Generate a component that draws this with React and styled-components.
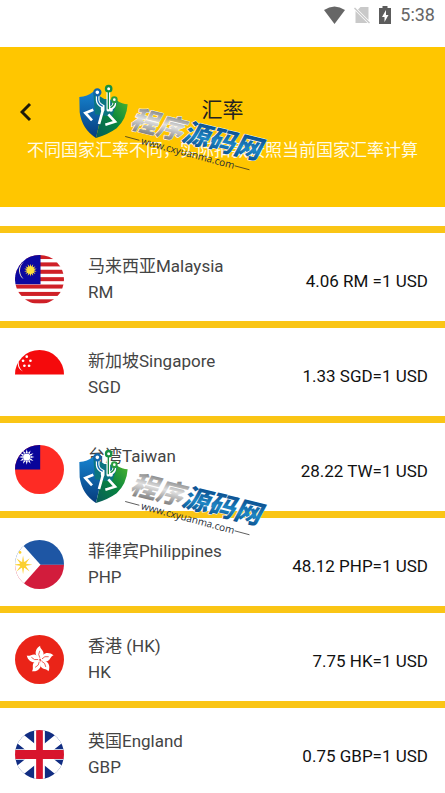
import React from "react";
import styled, { createGlobalStyle } from "styled-components";

const GlobalStyle = createGlobalStyle`
  html {
    scrollbar-width: none;
  }
  body {
    margin: 0;
    background: #fff;
    font-family: Roboto, "Noto Sans CJK SC", sans-serif;
  }
`;

const Page = styled.div`
  overflow-x: hidden;
`;

const StatusBar = styled.div`
  display: flex;
  align-items: center;
  justify-content: flex-end;
  height: 24px;
  padding: 3px 10px 20px;
  font-size: 18px;
  line-height: 24px;
  color: #666;
  svg {
    display: block;
  }
`;

const StatusIcon = styled.svg`
  height: 18px;
  width: ${({ $width }) => $width}px;
  margin-right: 9px;
`;

const Header = styled.header`
  position: relative;
  padding: 47px 16px 45px;
  background: #ffc600;
`;

const TitleRow = styled.div`
  display: grid;
  grid-template-columns: 1fr auto 1fr;
  align-items: center;
`;

const BackButton = styled.button`
  display: flex;
  justify-self: start;
  padding: 6px 4px 2px;
  border: 0;
  background: none;
  cursor: pointer;
`;

const Title = styled.h1`
  margin: 0;
  font-size: 21px;
  font-weight: 400;
  line-height: 32px;
  color: #222;
`;

const Notice = styled.p`
  margin: 12px -16px 0;
  font-size: 17px;
  line-height: 24px;
  color: #fffbe6;
  text-align: center;
`;

const List = styled.ul`
  margin: 19px 0 0;
  padding: 0;
  list-style: none;
`;

const Row = styled.li`
  position: relative;
  display: flex;
  align-items: center;
  padding: 20px 17px 16px 15px;
  border-top: 7px solid #fac515;
`;

const Flag = styled.svg`
  flex: none;
  width: 49px;
  height: 49px;
  margin-right: 24px;
  border-radius: 50%;
`;

const Country = styled.div`
  flex: 1;
  font-size: 17px;
  line-height: 26px;
  color: #444;
`;

const Name = styled.div``;

const Code = styled.div``;

const Rate = styled.span`
  padding-top: 4px;
  font-size: 17px;
  line-height: 26px;
  color: #111;
`;

const Mark = styled.svg`
  position: absolute;
  z-index: 1;
  left: 70px;
  top: ${({ $top }) => $top}px;
  width: 205px;
  height: 105px;
  pointer-events: none;
`;

const Watermark = ({ id, top }) => (
  <Mark $top={top} viewBox="0 0 615 315">
    <defs>
      <linearGradient id={`${id}-left`} x1="0" y1="0" x2="0" y2="1">
        <stop offset="0" stopColor="#1683cf" />
        <stop offset="1" stopColor="#063b7c" />
      </linearGradient>
      <linearGradient id={`${id}-right`} x1="1" y1="0" x2="0" y2="1">
        <stop offset="0" stopColor="#4db52d" />
        <stop offset="0.5" stopColor="#07833f" />
        <stop offset="1" stopColor="#075a5c" />
      </linearGradient>
      <linearGradient id={`${id}-silver`} x1="0" y1="0" x2="0" y2="1">
        <stop offset="0.2" stopColor="#858585" />
        <stop offset="0.5" stopColor="#e0e0e0" />
        <stop offset="0.9" stopColor="#747474" />
      </linearGradient>
      <linearGradient id={`${id}-blue`} x1="0" y1="0" x2="0" y2="1">
        <stop offset="0.2" stopColor="#0b4c8c" />
        <stop offset="0.6" stopColor="#1d86c4" />
        <stop offset="0.9" stopColor="#0a4a88" />
      </linearGradient>
    </defs>
    <path d="M28 66 Q52 64 70 50 L103 80 L78 189 Q36 163 29 112 Z" fill={`url(#${id}-left)`} />
    <path d="M103 72 L139 76 Q157 88 173 88 Q170 132 140 160 Q112 180 78 189 Q90 140 103 72 Z" fill={`url(#${id}-right)`} />
    <path d="M70 52 L103 72 L143 78 L126 125 L75 118 Z" fill="#0a7580" />
    <g fill="none" strokeLinecap="round">
      <g stroke="#fff" strokeWidth="11">
        <path d="M83 58 V76 Q84 87 98 94 V104" />
        <path d="M115 47 V104" />
        <path d="M133 82 Q134 94 123 99 V105" />
      </g>
      <path d="M83 60 V74 Q84 87 97 93" stroke="#0e69ad" strokeWidth="4" />
      <path d="M115 50 V101" stroke="#168a43" strokeWidth="4" />
      <path d="M133 82 Q133 92 123 97" stroke="#168a43" strokeWidth="4" />
      <circle cx="82" cy="52" r="9" fill="#fff" stroke="#1165aa" strokeWidth="7" />
      <circle cx="116" cy="41" r="8" fill="#fff" stroke="#159044" strokeWidth="7" />
      <circle cx="133" cy="74" r="7" fill="#fff" stroke="#299c3e" strokeWidth="6" />
    </g>
    <path d="M70 104 L46 114 L66 136 M99 104 L87 147 M115 118 L135 140 L106 149" fill="none" stroke="#fff" strokeWidth="8" />
    <g transform="rotate(14 179 150)" fontFamily="'Noto Sans CJK SC', sans-serif" fontWeight="900" fontStyle="italic" fontSize="80">
      <text x="179" y="158" stroke="#fff" strokeWidth="3" strokeLinejoin="round" paintOrder="stroke">
        <tspan fill={`url(#${id}-silver)`}>程序</tspan>
        <tspan fill={`url(#${id}-blue)`}>源码网</tspan>
      </text>
    </g>
    <g transform="rotate(15 168 183)">
      <path d="M166 185 H210 M506 185 H552" stroke="#222" strokeWidth="2" />
      <text x="216" y="195" fill="#1d2b35" fontFamily="'Open Sans', sans-serif" fontSize="30" fontWeight="500">
        www.cxyuanma.com
      </text>
    </g>
  </Mark>
);

const rays = (count, cx, cy, inner, outer, half) =>
  Array.from({ length: count }, (_, i) => (
    <path
      key={i}
      d={`M${cx - half} ${cy - inner} L${cx} ${cy - outer} L${cx + half} ${cy - inner} Z`}
      transform={`rotate(${(360 / count) * i} ${cx} ${cy})`}
    />
  ));

const Malaysia = () => (
  <>
    <rect width="146" height="146" fill="#fff" />
    {[0, 1, 2, 3, 4, 5, 6].map((i) => (
      <rect key={i} y={i * 22} width="146" height="12" fill="#cf2027" />
    ))}
    <rect width="76" height="87" fill="#0c08a0" />
    <path d="M27 20 A31 31 0 0 0 31 75 A34 34 0 0 1 27 20 Z" fill="#fff6c8" />
    <g fill="#ffe23c">
      <circle cx="46" cy="45" r="10" />
      {rays(14, 46, 45, 8, 19, 3)}
    </g>
  </>
);

const Singapore = () => (
  <>
    <rect width="146" height="146" fill="#fff" />
    <rect width="146" height="73" fill="#f50a0c" />
    <path d="M22 16 A27 27 0 0 0 26 65 A30 30 0 0 1 22 16 Z" fill="#fff" />
    <g fill="#fff">
      {[[35, 20], [24, 32], [46, 32], [28, 47], [42, 47]].map(([x, y]) => (
        <circle key={`${x}-${y}`} cx={x} cy={y} r="4" />
      ))}
    </g>
  </>
);

const Taiwan = () => (
  <>
    <rect width="146" height="146" fill="#fe2b24" />
    <rect width="75" height="73" fill="#09049a" />
    <g fill="#fff">
      <circle cx="35" cy="36" r="11" />
      {rays(12, 35, 36, 12, 23, 3)}
    </g>
  </>
);

const Philippines = () => (
  <>
    <rect width="146" height="74" fill="#1e56a4" />
    <rect y="74" width="146" height="72" fill="#d21c3c" />
    <path d="M0 -11 L76 74 L0 159 Z" fill="#fff" />
    <g fill="#fbd02f">
      <circle cx="24" cy="74" r="10" />
      {rays(8, 24, 74, 9, 28, 3)}
      <circle cx="15" cy="37" r="4" />
    </g>
  </>
);

const HongKong = () => (
  <>
    <rect width="146" height="146" fill="#ea2418" />
    {[0, 72, 144, 216, 288].map((angle) => (
      <g key={angle} transform={`rotate(${angle} 75 74)`}>
        <path d="M75 72 C58 65 56 43 75 32 C73 42 90 47 84 61 Q81 68 75 72 Z" fill="#fff" />
        <path d="M74 68 Q67 58 74 47" fill="none" stroke="#ea2418" strokeWidth="2" />
      </g>
    ))}
  </>
);

const England = () => (
  <>
    <rect width="146" height="146" fill="#112d82" />
    <path d="M0 14 L146 132 M146 14 L0 132" stroke="#fff" strokeWidth="32" />
    <path d="M73 0 V146 M0 73 H146" stroke="#fff" strokeWidth="32" />
    <path d="M73 0 V146" stroke="#d8142c" strokeWidth="20" />
    <path d="M0 73 H146" stroke="#d8142c" strokeWidth="27" />
  </>
);

const rates = [
  { name: "马来西亚Malaysia", code: "RM", rate: "4.06 RM =1 USD", Art: Malaysia },
  { name: "新加坡Singapore", code: "SGD", rate: "1.33 SGD=1 USD", Art: Singapore },
  { name: "台湾Taiwan", code: "\u00a0", rate: "28.22 TW=1 USD", Art: Taiwan, marked: true },
  { name: "菲律宾Philippines", code: "PHP", rate: "48.12 PHP=1 USD", Art: Philippines },
  { name: "香港 (HK)", code: "HK", rate: "7.75 HK=1 USD", Art: HongKong },
  { name: "英国England", code: "GBP", rate: "0.75 GBP=1 USD", Art: England },
];

const App = () => {
  const rateList = rates.map(({ name, code, rate, Art, marked }) => (
    <Row key={name}>
      <Flag viewBox="0 0 146 146">
        <Art />
      </Flag>
      <Country>
        <Name>{name}</Name>
        <Code>{code}</Code>
      </Country>
      <Rate>{rate}</Rate>
      {marked && <Watermark id="mark-row" top={17} />}
    </Row>
  ));

  return (
    <Page>
      <GlobalStyle />
      <StatusBar>
        <StatusIcon $width={21} viewBox="0 0 21 18">
          <path d="M0 4 Q10.500 -3 21 4 L10.500 18 Z" fill="#666" />
        </StatusIcon>
        <StatusIcon $width={16} viewBox="0 0 15 18">
          <path d="M6 1 H14 V14 L3.500 3.500 Z M1 5 L13 17 H1 Z" fill="#c9c9c9" />
          <path d="M0 2 L15 17" stroke="#c9c9c9" strokeWidth="1.500" />
        </StatusIcon>
        <StatusIcon $width={12} viewBox="0 0 12 18">
          <path d="M0 2 H3.500 V0 H8.500 V2 H12 V18 H0 Z M7 4 L3 11 H5.500 V16 L9.500 9 H7 Z" fill="#5c5c5c" fillRule="evenodd" />
        </StatusIcon>
        <span>5:38</span>
      </StatusBar>
      <Header>
        <TitleRow>
          <BackButton aria-label="返回">
            <svg width="12" height="20" viewBox="0 0 12 20">
              <path d="M10 2 L2 10 L10 18" fill="none" stroke="#1f1a08" strokeWidth="3" />
            </svg>
          </BackButton>
          <Title>汇率</Title>
        </TitleRow>
        <Notice>不同国家汇率不同，实际扣款按照当前国家汇率计算</Notice>
        <Watermark id="mark-header" top={28} />
      </Header>
      <List>{rateList}</List>
    </Page>
  );
};

export default App;
